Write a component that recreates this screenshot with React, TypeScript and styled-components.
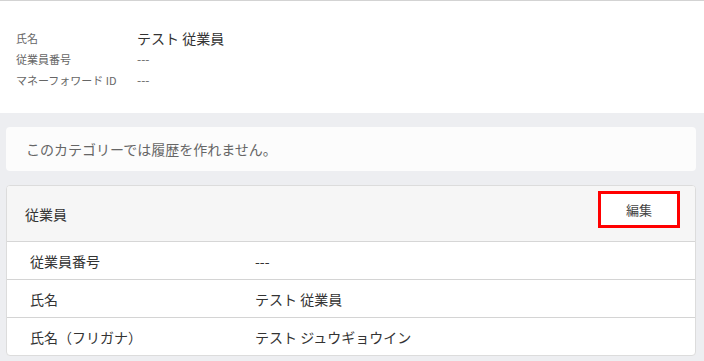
import React from 'react';
import styled, { createGlobalStyle } from 'styled-components';

const GlobalStyle = createGlobalStyle`
  html, body {
    margin: 0;
    padding: 0;
    background: #edeef1;
    font-family: "Noto Sans CJK JP", "Noto Sans", sans-serif;
    color: #333;
  }
`;

const Summary = styled.section`
  background: #fff;
  border-top: 1px solid #d3d3d3;
  padding: 26px 16px 23px;
`;

const SummaryRow = styled.div`
  display: grid;
  grid-template-columns: 121px 1fr;
  align-items: center;
  height: 21px;
`;

const SummaryLabel = styled.span`
  font-size: 11px;
  color: #666;
`;

const SummaryValue = styled.span<{ $strong?: boolean }>`
  font-size: ${(p) => (p.$strong ? '14px' : '12px')};
  color: ${(p) => (p.$strong ? '#333' : '#666')};
`;

const Main = styled.main`
  padding: 14px 8px 5px 6px;
  display: flex;
  flex-direction: column;
  gap: 14px;
`;

const Notice = styled.div`
  height: 44px;
  background: #fcfcfc;
  border-radius: 4px;
  display: flex;
  align-items: center;
  padding-left: 20px;
  font-size: 14px;
  color: #666;
`;

const Panel = styled.div`
  background: #fff;
  border: 1px solid #dcdcdc;
  border-radius: 4px;
  overflow: hidden;
`;

const PanelHeader = styled.div`
  height: 55px;
  background: #f6f6f6;
  border-bottom: 1px solid #d6d6d6;
  display: flex;
  align-items: center;
  justify-content: space-between;
  padding: 0 15px 0 18px;
  font-size: 14px;
  color: #333;
`;

const EditButton = styled.button`
  width: 82px;
  height: 37px;
  margin-bottom: 8px;
  background: #fff;
  border: 3px solid #ff0000;
  font-family: inherit;
  font-size: 13px;
  color: #444;
  cursor: pointer;
`;

const Row = styled.div`
  display: grid;
  grid-template-columns: 225px 1fr;
  align-items: center;
  height: 37px;
  padding-left: 23px;
  font-size: 14px;
  color: #333;
  & + & {
    border-top: 1px solid #d4d4d4;
  }
`;

const summary = [
  { label: '氏名', value: 'テスト 従業員', strong: true },
  { label: '従業員番号', value: '---' },
  { label: 'マネーフォワード ID', value: '---' },
];

const rows = [
  { label: '従業員番号', value: '---' },
  { label: '氏名', value: 'テスト 従業員' },
  { label: '氏名（フリガナ）', value: 'テスト ジュウギョウイン' },
];

export default function App() {
  return (
    <>
      <GlobalStyle />
      <Summary>
        {summary.map((s) => (
          <SummaryRow key={s.label}>
            <SummaryLabel>{s.label}</SummaryLabel>
            <SummaryValue $strong={s.strong}>{s.value}</SummaryValue>
          </SummaryRow>
        ))}
      </Summary>
      <Main>
        <Notice>このカテゴリーでは履歴を作れません。</Notice>
        <Panel>
          <PanelHeader>
            <span>従業員</span>
            <EditButton>編集</EditButton>
          </PanelHeader>
          {rows.map((r) => (
            <Row key={r.label}>
              <span>{r.label}</span>
              <span>{r.value}</span>
            </Row>
          ))}
        </Panel>
      </Main>
    </>
  );
}
